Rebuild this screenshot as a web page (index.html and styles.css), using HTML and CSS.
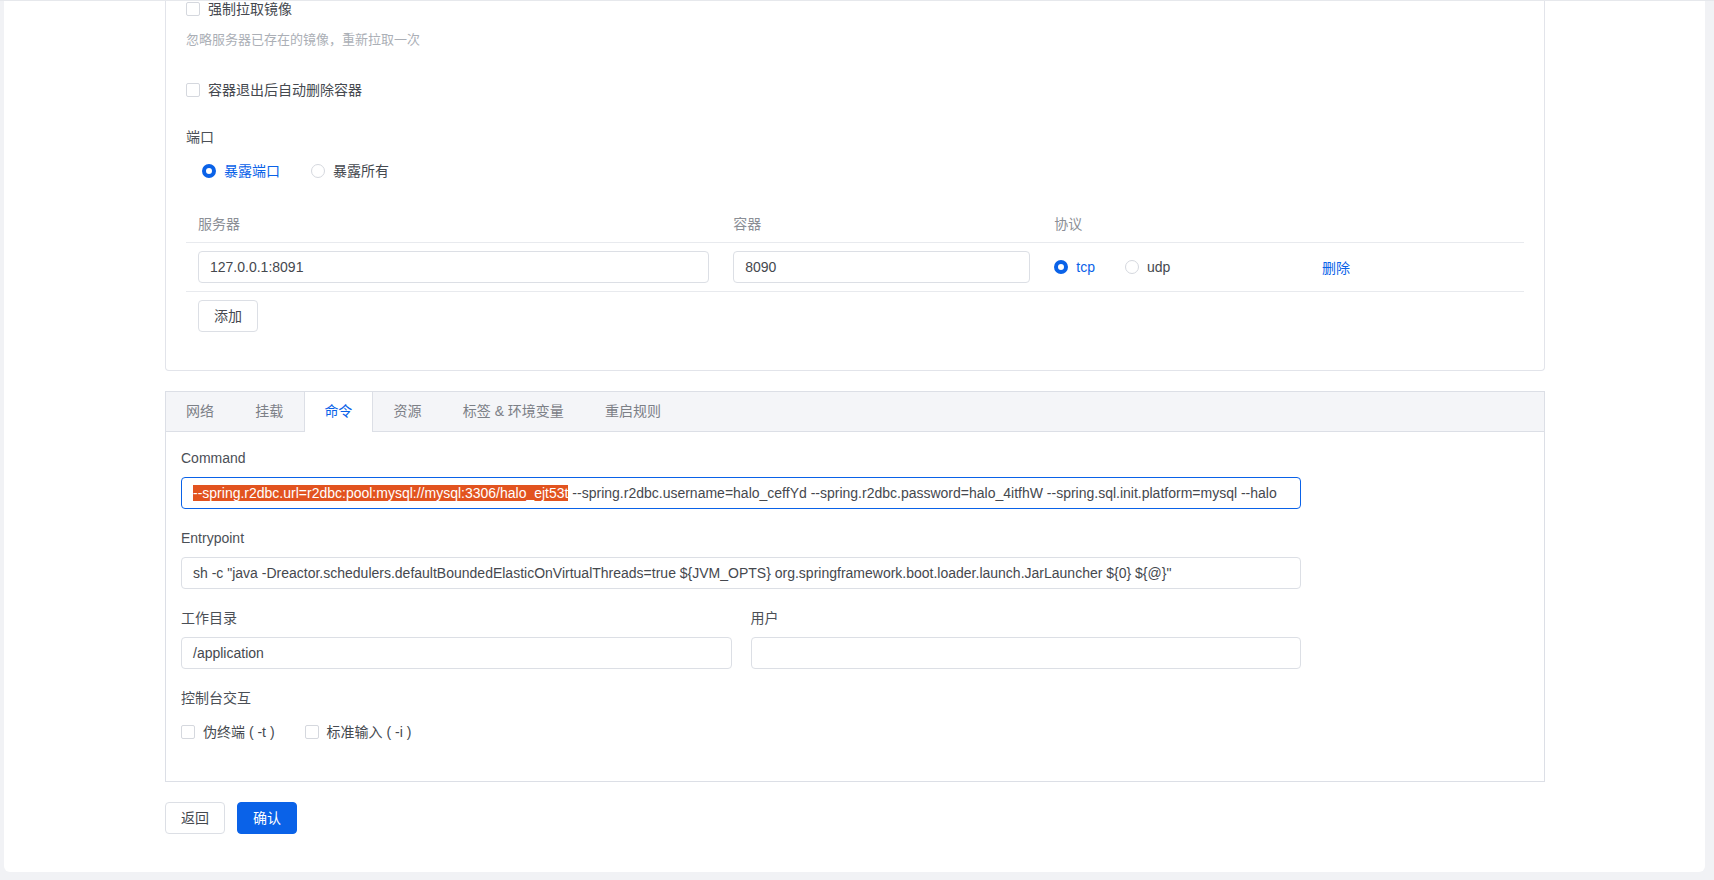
FILE: index.html
```html
<!DOCTYPE html>
<html lang="zh-CN">
<head>
<meta charset="utf-8">
<title>容器编辑</title>
<link rel="stylesheet" href="styles.css">
</head>
<body>
<div class="card">
  <div class="panel panel-top">
    <label class="check-row first">
      <span class="checkbox"></span><span>强制拉取镜像</span>
    </label>
    <div class="helper">忽略服务器已存在的镜像，重新拉取一次</div>
    <label class="check-row second">
      <span class="checkbox"></span><span>容器退出后自动删除容器</span>
    </label>
    <div class="field-label ports-label">端口</div>
    <div class="radio-group">
      <label class="radio-item checked"><span class="radio"></span><span>暴露端口</span></label>
      <label class="radio-item"><span class="radio"></span><span>暴露所有</span></label>
    </div>
    <table class="port-table">
      <colgroup>
        <col class="c1"><col class="c2"><col class="c3"><col class="c4">
      </colgroup>
      <thead>
        <tr><th>服务器</th><th>容器</th><th>协议</th><th></th></tr>
      </thead>
      <tbody>
        <tr>
          <td><div class="input">127.0.0.1:8091</div></td>
          <td><div class="input">8090</div></td>
          <td>
            <div class="radio-inline">
              <label class="radio-item checked"><span class="radio"></span><span>tcp</span></label>
              <label class="radio-item"><span class="radio"></span><span>udp</span></label>
            </div>
          </td>
          <td><span class="link">删除</span></td>
        </tr>
      </tbody>
    </table>
    <button class="btn add-btn">添加</button>
  </div>

  <div class="panel panel-tabs">
    <div class="tab-bar">
      <div class="tab">网络</div>
      <div class="tab">挂载</div>
      <div class="tab active">命令</div>
      <div class="tab">资源</div>
      <div class="tab">标签 &amp; 环境变量</div>
      <div class="tab">重启规则</div>
    </div>
    <div class="tab-body">
      <div class="form">
        <div class="form-item">
          <div class="field-label">Command</div>
          <div class="input focused"><span class="sel">--spring.r2dbc.url=r2dbc:pool:mysql://mysql:3306/halo_ejt53t</span> --spring.r2dbc.username=halo_ceffYd --spring.r2dbc.password=halo_4itfhW --spring.sql.init.platform=mysql --halo</div>
        </div>
        <div class="form-item">
          <div class="field-label">Entrypoint</div>
          <div class="input">sh -c "java -Dreactor.schedulers.defaultBoundedElasticOnVirtualThreads=true ${JVM_OPTS} org.springframework.boot.loader.launch.JarLauncher ${0} ${@}"</div>
        </div>
        <div class="form-row">
          <div class="form-item">
            <div class="field-label">工作目录</div>
            <div class="input">/application</div>
          </div>
          <div class="form-item">
            <div class="field-label">用户</div>
            <div class="input"></div>
          </div>
        </div>
        <div class="form-item">
          <div class="field-label">控制台交互</div>
          <div class="check-group">
            <label class="check-row"><span class="checkbox"></span><span>伪终端 ( -t )</span></label>
            <label class="check-row"><span class="checkbox"></span><span>标准输入 ( -i )</span></label>
          </div>
        </div>
      </div>
    </div>
  </div>

  <div class="actions">
    <button class="btn">返回</button>
    <button class="btn primary">确认</button>
  </div>
</div>
</body>
</html>
```

FILE: styles.css
```css
* { box-sizing: border-box; }

html, body {
  margin: 0;
  padding: 0;
}

body {
  background: #f1f2f5;
  font-family: "Liberation Sans", "Noto Sans CJK SC", sans-serif;
  font-size: 14px;
  color: #4b4f56;
  border-top: 1px solid #e6e8ec;
  overflow: hidden;
  height: 880px;
}

.card {
  background: #ffffff;
  margin-left: 4px;
  width: 1701px;
  padding: 0 0 38px 161px;
  border-radius: 0 0 6px 6px;
}

.panel {
  width: 1380px;
  border: 1px solid #e2e4ea;
  background: #fff;
}

.panel-top {
  border-top: none;
  border-radius: 0 0 4px 4px;
  padding: 0 20px 38px 20px;
  margin-top: -3px;
}

.check-row {
  display: flex;
  align-items: center;
  height: 22px;
  line-height: 22px;
  color: #45494f;
}

.check-row.second { margin-top: 29px; }

.checkbox {
  width: 14px;
  height: 14px;
  border: 1px solid #d5d8de;
  border-radius: 2px;
  background: #fff;
  margin-right: 8px;
  flex: none;
}

.helper {
  margin-top: 10px;
  line-height: 20px;
  font-size: 13px;
  color: #abafb6;
}

.field-label {
  line-height: 22px;
  color: #4b4f56;
}

.ports-label { margin-top: 25px; }

.radio-group {
  display: flex;
  margin-top: 12px;
  padding-left: 16px;
  height: 22px;
  gap: 31px;
}

.radio-item {
  display: flex;
  align-items: center;
  line-height: 22px;
  color: #45494f;
}

.radio-item.checked { color: #0a62e8; }

.radio {
  width: 14px;
  height: 14px;
  border: 1px solid #d5d8de;
  border-radius: 50%;
  margin-right: 8px;
  flex: none;
  background: #fff;
}

.radio-item.checked .radio {
  border: 4.5px solid #0a62e8;
  background: #fff;
}

.port-table {
  width: 100%;
  border-collapse: collapse;
  margin-top: 17px;
}

.port-table col.c1 { width: 40%; }
.port-table col.c2 { width: 24%; }
.port-table col.c3 { width: 20%; }
.port-table col.c4 { width: 16%; }

.port-table th {
  text-align: left;
  font-weight: normal;
  color: #8b8f96;
  padding: 14px 12px 7px;
  line-height: 22px;
  border-bottom: 1px solid #e8eaee;
}

.port-table td {
  padding: 8px 12px;
  border-bottom: 1px solid #e8eaee;
  vertical-align: middle;
}

.radio-inline {
  display: flex;
  gap: 30px;
}

.link { color: #0a62e8; }

.input {
  height: 32px;
  line-height: 30px;
  border: 1px solid #dcdfe5;
  border-radius: 4px;
  padding: 0 11px;
  color: #45484e;
  white-space: nowrap;
  overflow: hidden;
  background: #fff;
}

.input.focused { border-color: #0a62e8; }

.sel {
  background: #e2531f;
  color: #fff;
}

.btn {
  font-family: inherit;
  font-size: 14px;
  height: 32px;
  padding: 0 15px;
  border: 1px solid #dcdfe5;
  border-radius: 4px;
  background: #fff;
  color: #45494f;
  line-height: 30px;
}

.add-btn {
  display: block;
  margin-top: 8px;
  margin-left: 12px;
  width: 60px;
}

.panel-tabs {
  margin-top: 20px;
  border-color: #dcdfe6;
}

.tab-bar {
  display: flex;
  height: 40px;
  background: #f4f5f8;
  border-bottom: 1px solid #dcdfe6;
}

.tab {
  padding: 0 20.6px;
  line-height: 39px;
  height: 40px;
  color: #7c8087;
}

.tab:first-child { padding-left: 20px; }

.tab.active {
  background: #fff;
  color: #0a62e8;
  border-left: 1px solid #dcdfe6;
  border-right: 1px solid #dcdfe6;
  padding: 0 19.6px;
}

.tab-body {
  padding: 15px 15px 16px 15px;
}

.form {
  width: 1120px;
}

.form-item {
  margin-bottom: 18px;
}

.form-item .field-label {
  margin-bottom: 8px;
}

.form-row {
  display: grid;
  grid-template-columns: 1fr 1fr;
  gap: 19px;
}

.check-group {
  display: flex;
  gap: 30px;
  height: 30px;
  align-items: center;
}

.actions {
  display: flex;
  gap: 12px;
  margin-top: 20px;
}

.actions .btn { width: 60px; padding: 0; }

.btn.primary {
  background: #0a62e8;
  border-color: #0a62e8;
  color: #fff;
}
```
